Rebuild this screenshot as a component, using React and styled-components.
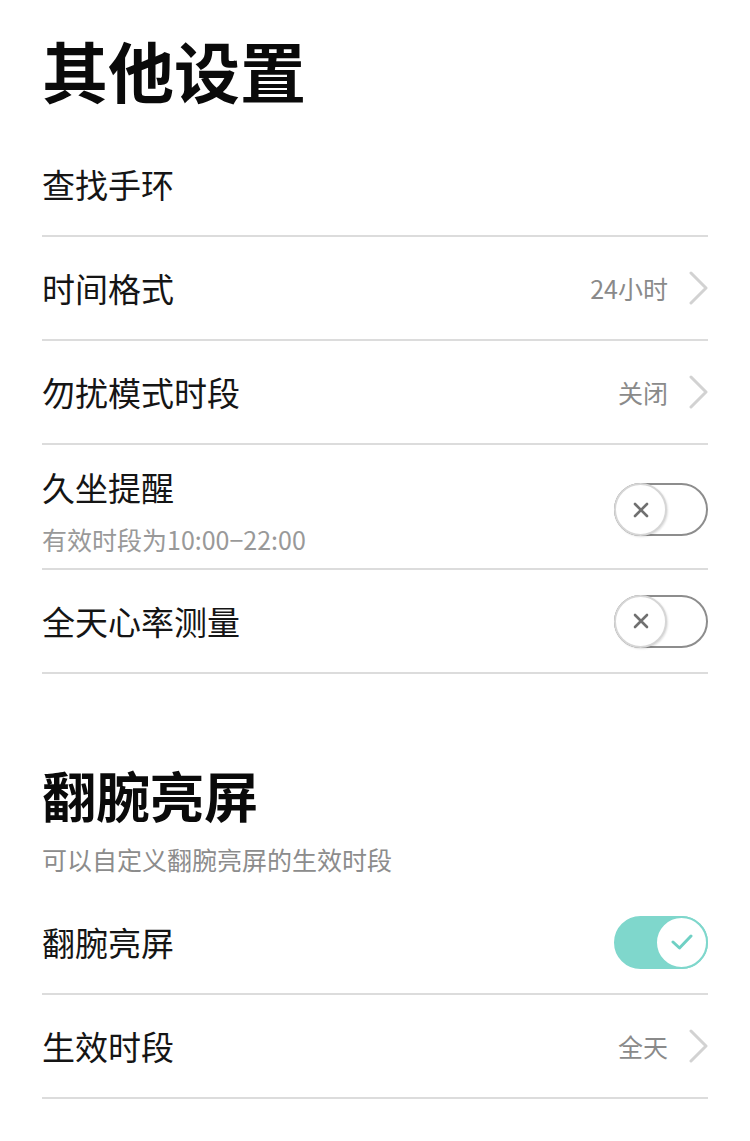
import React from "react";
import styled, { createGlobalStyle } from "styled-components";

const GlobalStyle = createGlobalStyle`
  html, body {
    margin: 0;
    padding: 0;
    background: #ffffff;
  }
  body {
    font-family: "Noto Sans CJK SC", "Noto Sans", sans-serif;
    color: #111111;
  }
`;

const Page = styled.div`
  width: 750px;
  min-height: 1141px;
  box-sizing: border-box;
  padding: 29px 42px 40px;
  background: #ffffff;
`;

const PageTitle = styled.h1`
  margin: 0 0 24px;
  font-size: 66px;
  line-height: 80px;
  font-weight: 700;
  color: #0a0a0a;
`;

const SectionTitle = styled.h2`
  margin: 86px 0 11px;
  font-size: 54px;
  line-height: 70px;
  font-weight: 700;
  color: #0a0a0a;
`;

const SectionHint = styled.div`
  margin-bottom: 14px;
  font-size: 25px;
  line-height: 36px;
  color: #8c8c8c;
`;

const Row = styled.div`
  display: flex;
  align-items: center;
  justify-content: space-between;
  box-sizing: border-box;
  min-height: 104px;
  padding: ${({ $tall }) => ($tall ? "22px 0 12px" : "0")};
  border-bottom: 2px solid #dcdcdc;
`;

const Labels = styled.div`
  display: flex;
  flex-direction: column;
`;

const Label = styled.div`
  font-size: 33px;
  line-height: 40px;
  color: #151515;
`;

const SubLabel = styled.div`
  margin-top: 15px;
  font-size: 25px;
  line-height: 34px;
  color: #999999;
`;

const Value = styled.div`
  display: flex;
  align-items: center;
  gap: 20px;
  font-size: 25px;
  color: #8a8a8a;
`;

const Chevron = () => (
  <svg width="20" height="34" viewBox="0 0 20 34">
    <path d="M3 2 L18 17 L3 32" fill="none" stroke="#d2d2d2" strokeWidth="3" strokeLinecap="round" strokeLinejoin="round" />
  </svg>
);

const Track = styled.div`
  position: relative;
  box-sizing: border-box;
  width: 94px;
  height: 53px;
  margin-top: ${({ $lift }) => ($lift ? "-4px" : "0")};
  border-radius: 27px;
  border: 2px solid ${({ $on }) => ($on ? "#7fd7cc" : "#8d8d8d")};
  background: ${({ $on }) => ($on ? "#7fd7cc" : "#ffffff")};
`;

const Thumb = styled.div`
  position: absolute;
  top: -2px;
  ${({ $on }) => ($on ? "right: -2px;" : "left: -2px;")}
  box-sizing: border-box;
  width: 53px;
  height: 53px;
  border-radius: 50%;
  background: #ffffff;
  border: 2px solid ${({ $on }) => ($on ? "#7fd7cc" : "#d6d6d6")};
  box-shadow: ${({ $on }) => ($on ? "none" : "1px 1px 2px rgba(0,0,0,0.12)")};
  display: flex;
  align-items: center;
  justify-content: center;
`;

const Toggle = ({ on, lift }) => (
  <Track $on={on} $lift={lift}>
    <Thumb $on={on}>
      {on ? (
        <svg width="22" height="18" viewBox="0 0 22 18">
          <path d="M2 9 L8.5 15 L20 3" fill="none" stroke="#6fd0c4" strokeWidth="3" strokeLinecap="round" strokeLinejoin="round" />
        </svg>
      ) : (
        <svg width="16" height="16" viewBox="0 0 16 16">
          <path d="M2 2 L14 14 M14 2 L2 14" fill="none" stroke="#707070" strokeWidth="2.6" strokeLinecap="round" />
        </svg>
      )}
    </Thumb>
  </Track>
);

const App = () => (
  <>
    <GlobalStyle />
    <Page>
      <PageTitle>其他设置</PageTitle>

      <Row>
        <Label>查找手环</Label>
      </Row>
      <Row>
        <Label>时间格式</Label>
        <Value>
          24小时
          <Chevron />
        </Value>
      </Row>
      <Row>
        <Label>勿扰模式时段</Label>
        <Value>
          关闭
          <Chevron />
        </Value>
      </Row>
      <Row $tall>
        <Labels>
          <Label>久坐提醒</Label>
          <SubLabel>有效时段为10:00−22:00</SubLabel>
        </Labels>
        <Toggle on={false} lift />
      </Row>
      <Row>
        <Label>全天心率测量</Label>
        <Toggle on={false} />
      </Row>

      <SectionTitle>翻腕亮屏</SectionTitle>
      <SectionHint>可以自定义翻腕亮屏的生效时段</SectionHint>

      <Row>
        <Label>翻腕亮屏</Label>
        <Toggle on />
      </Row>
      <Row>
        <Label>生效时段</Label>
        <Value>
          全天
          <Chevron />
        </Value>
      </Row>
    </Page>
  </>
);

export default App;
